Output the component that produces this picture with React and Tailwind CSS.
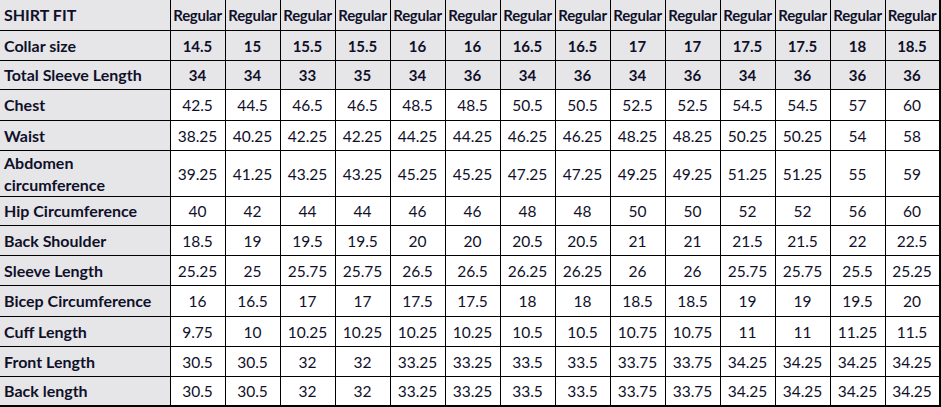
import React from "react";

// Shirt size chart
const sizes = [
  ["14.5", "34"], ["15", "34"], ["15.5", "33"], ["15.5", "35"], ["16", "34"], ["16", "36"], ["16.5", "34"],
  ["16.5", "36"], ["17", "34"], ["17", "36"], ["17.5", "34"], ["17.5", "36"], ["18", "36"], ["18.5", "36"],
];

const rows = [
  ["Chest", "42.5 44.5 46.5 46.5 48.5 48.5 50.5 50.5 52.5 52.5 54.5 54.5 57 60", "h-[31px]"],
  ["Waist", "38.25 40.25 42.25 42.25 44.25 44.25 46.25 46.25 48.25 48.25 50.25 50.25 54 58", "h-[30px]"],
  ["Abdomen circumference", "39.25 41.25 43.25 43.25 45.25 45.25 47.25 47.25 49.25 49.25 51.25 51.25 55 59", "h-[46px]"],
  ["Hip Circumference", "40 42 44 44 46 46 48 48 50 50 52 52 56 60", "h-[29px]"],
  ["Back Shoulder", "18.5 19 19.5 19.5 20 20 20.5 20.5 21 21 21.5 21.5 22 22.5", "h-[30px]"],
  ["Sleeve Length", "25.25 25 25.75 25.75 26.5 26.5 26.25 26.25 26 26 25.75 25.75 25.5 25.25", "h-[30px]"],
  ["Bicep Circumference", "16 16.5 17 17 17.5 17.5 18 18 18.5 18.5 19 19 19.5 20", "h-[31px]"],
  ["Cuff Length", "9.75 10 10.25 10.25 10.25 10.25 10.5 10.5 10.75 10.75 11 11 11.25 11.5", "h-[30px]"],
  ["Front Length", "30.5 30.5 32 32 33.25 33.25 33.5 33.5 33.75 33.75 34.25 34.25 34.25 34.25", "h-[30px]"],
  ["Back length", "30.5 30.5 32 32 33.25 33.25 33.5 33.5 33.75 33.75 34.25 34.25 34.25 34.25", "h-[30px]"],
];

const label = "bg-[#e6e6e8] border border-black border-l-0 text-left pl-[4px] font-bold text-[16px] leading-[22px]";
const head = "bg-[#e6e6e8] border border-black text-center font-bold text-[15px] leading-[20px]";
const cell = "bg-white border border-black text-center text-[15.5px] leading-[20px]";

let App = () => {
  return (
    <div className="w-[941px] h-[407px] bg-white overflow-hidden font-['Lato','Open_Sans',sans-serif] text-[#10102a]">
      <table className="border-collapse table-fixed w-[940px] border-r-[3px] border-b-[3px] border-black -mt-px">
        <colgroup>
          <col className="w-[170px]" />
          {sizes.map((_, i) => (
            <col key={i} className="w-[55px]" />
          ))}
        </colgroup>
        <tbody>
          {/* Fit row */}
          <tr className="h-[31px]">
            <td className={label}>SHIRT FIT</td>
            {sizes.map((_, i) => (
              <td key={i} className={head + " text-[14.5px] tracking-[-0.3px] px-0"}>Regular</td>
            ))}
          </tr>
          <tr className="h-[30px]">
            <td className={label}>Collar size</td>
            {sizes.map((s, i) => (
              <td key={i} className={head}>{s[0]}</td>
            ))}
          </tr>
          <tr className="h-[29px]">
            <td className={label}>Total Sleeve Length</td>
            {sizes.map((s, i) => (
              <td key={i} className={head}>{s[1]}</td>
            ))}
          </tr>
          {/* Measurements */}
          {rows.map(([name, vals, h]) => (
            <tr key={name} className={h}>
              <td className={label}>
                {name === "Abdomen circumference" ? (
                  <>
                    Abdomen
                    <br />
                    circumference
                  </>
                ) : (
                  name
                )}
              </td>
              {vals.split(" ").map((v, i) => (
                <td key={i} className={cell}>{v}</td>
              ))}
            </tr>
          ))}
        </tbody>
      </table>
    </div>
  );
};

export default App;
